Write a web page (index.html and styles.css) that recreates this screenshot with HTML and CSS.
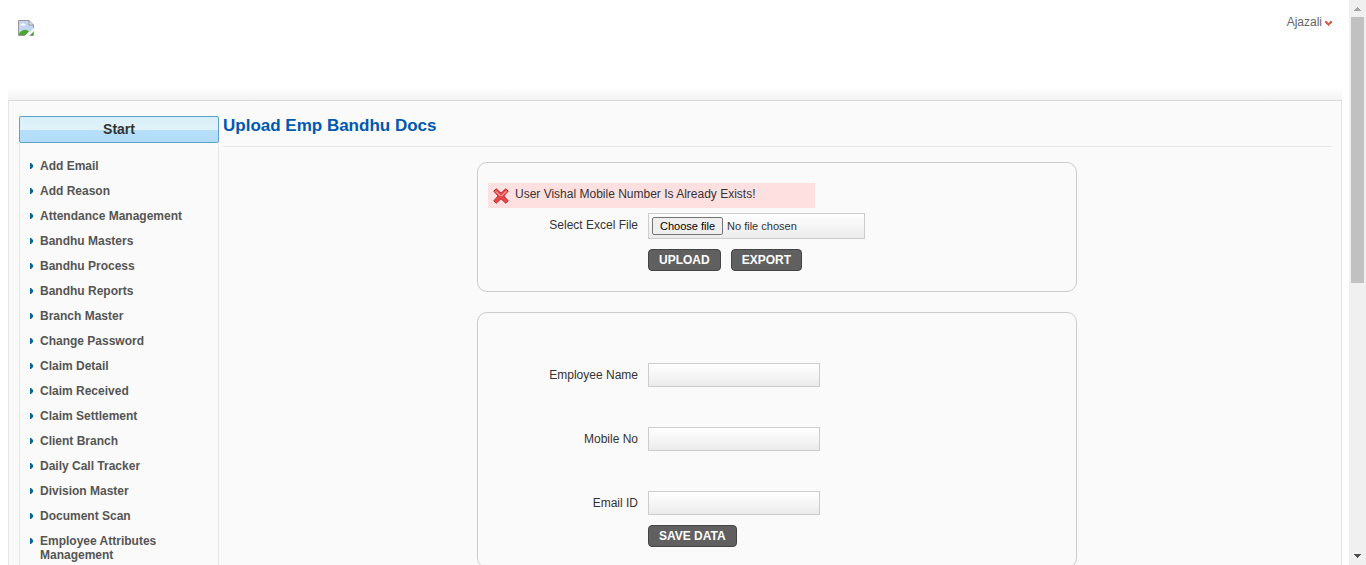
FILE: index.html
```html
<!DOCTYPE html>
<html lang="en">
<head>
<meta charset="utf-8">
<title>Upload Emp Bandhu Docs</title>
<link rel="stylesheet" href="styles.css">
</head>
<body>
<div class="page">
  <header class="header">
    <a class="logo" href="#" aria-label="Home">
      <svg width="16" height="16" viewBox="0 0 16 16">
        <path d="M1 1h10l4 4v10H1z" fill="#c3d5f5"/>
        <path d="M2.500 5.500a1 1 0 0 1 1-1.300 1.600 1.600 0 0 1 3 0 1 1 0 0 1 1 1.300z" fill="#fff"/>
        <path d="M1 15v-1.500C3 11 5 9.800 7 9.800S10 10.500 11 11.500L7.500 15z" fill="#47a82c"/>
        <path d="M12 15l3-3v3z" fill="#47a82c"/>
        <path d="M11 1l4 4h-4z" fill="#f2f2f2"/>
        <path d="M.500 15.500V.500H11L15.500 5v10.500zM11 .500V5h4.500" fill="none" stroke="#979797"/>
        <path d="M6.500 16l5-4.500h1.500L16 7.500V11l-5 5z" fill="#fff"/>
      </svg>
    </a>
    <button class="user" type="button">Ajazali
      <svg width="7" height="5" viewBox="0 0 7 5" shape-rendering="crispEdges"><path d="M0 0h2v1h1v1h1V1h1V0h2v2H6v1H5v1H4v1H3V4H2V3H1V2H0z" fill="#d9604f"/></svg>
    </button>
  </header>
  <div class="body">
    <nav class="sidebar">
      <h2 class="start">Start</h2>
      <ul class="menu">
        <li><a href="#">Add Email</a></li>
        <li><a href="#">Add Reason</a></li>
        <li><a href="#">Attendance Management</a></li>
        <li><a href="#">Bandhu Masters</a></li>
        <li><a href="#">Bandhu Process</a></li>
        <li><a href="#">Bandhu Reports</a></li>
        <li><a href="#">Branch Master</a></li>
        <li><a href="#">Change Password</a></li>
        <li><a href="#">Claim Detail</a></li>
        <li><a href="#">Claim Received</a></li>
        <li><a href="#">Claim Settlement</a></li>
        <li><a href="#">Client Branch</a></li>
        <li><a href="#">Daily Call Tracker</a></li>
        <li><a href="#">Division Master</a></li>
        <li><a href="#">Document Scan</a></li>
        <li><a href="#">Employee Attributes Management</a></li>
      </ul>
    </nav>
    <main class="content">
      <h1 class="title">Upload Emp Bandhu Docs</h1>
      <form class="card">
        <p class="alert" role="alert">
          <svg width="16" height="16" viewBox="0 0 16 16"><path d="M3.200.800L8 5.200 12.800.800 15.200 3.200 10.800 8l4.400 4.800-2.400 2.400L8 10.800l-4.800 4.400L.800 12.800 5.200 8 .800 3.200z" fill="#e84a4a" stroke="#b8202a" stroke-width="1" stroke-linejoin="round"/><path d="M2.500 3.200L7 7.500h2l4.500-4.300" fill="none" stroke="#f59a96" stroke-width="1.200"/></svg>
          <span>User Vishal Mobile Number Is Already Exists!</span>
        </p>
        <div class="row">
          <label class="label" for="file">Select Excel File</label>
          <div class="file">
            <span class="choose" aria-hidden="true">Choose file</span>
            <span aria-hidden="true">No file chosen</span>
            <input class="picker" id="file" type="file">
          </div>
        </div>
        <div class="actions">
          <button class="button" type="button">UPLOAD</button>
          <button class="button" type="button">EXPORT</button>
        </div>
      </form>
      <form class="card person">
        <div class="row"><label class="label" for="name">Employee Name</label><input class="text" id="name" type="text"></div>
        <div class="row"><label class="label" for="mobile">Mobile No</label><input class="text" id="mobile" type="text"></div>
        <div class="row"><label class="label" for="email">Email ID</label><input class="text" id="email" type="text"></div>
        <div class="actions"><button class="button" type="button">SAVE DATA</button></div>
      </form>
    </main>
  </div>
</div>
<div class="scrollbar" aria-hidden="true">
  <svg width="17" height="17" viewBox="0 0 17 17" shape-rendering="crispEdges"><path d="M8 7h1v1h1v1h1v1h1v1H5v-1h1V9h1V8h1z" fill="#a3a3a3"/></svg>
  <div class="track"><div class="thumb"></div></div>
  <svg width="17" height="17" viewBox="0 0 17 17" shape-rendering="crispEdges"><path d="M5 6h7v1h-1v1h-1v1H9v1H8V9H7V8H6V7H5z" fill="#505050"/></svg>
</div>
</body>
</html>
```
FILE: styles.css
```css
* { box-sizing: border-box; }
body {
  margin: 0;
  height: 100vh;
  display: flex;
  overflow: hidden;
  background: #fff;
  color: #333;
  font: 12px/14px "Liberation Sans", Arial, sans-serif;
}
.page { flex: 1; padding: 0 7px 0 8px; overflow: hidden; }
.header {
  display: flex;
  justify-content: space-between;
  align-items: flex-start;
  height: 101px;
  padding: 15px 10px 0;
  border-bottom: 1px solid #d9d9d9;
  background: linear-gradient(#fff, #f3f3f3) bottom / 100% 13px no-repeat;
}
.logo { padding-top: 5px; }
.logo svg { display: block; }
.user {
  display: flex;
  align-items: center;
  gap: 3px;
  padding: 0;
  border: 0;
  background: none;
  color: #666;
  font: inherit;
}
.user svg { margin-top: 2px; }
.body {
  display: flex;
  gap: 4px;
  padding: 15px 10px 0;
  border: 1px solid #e6e6e6;
  border-width: 0 1px;
  background: #fafafa;
}
.sidebar { flex: 0 0 200px; }
.start {
  margin: 0;
  height: 27px;
  border: 1px solid #5ca3cb;
  border-radius: 2px;
  background: linear-gradient(#d9eff8, #e0f3f9 13px, #b6e0f9 13px, #b2dcf7);
  font-size: 14px;
  line-height: 25px;
  text-align: center;
}
.menu {
  display: flex;
  flex-direction: column;
  gap: 11px;
  margin: 0;
  padding: 16px 9px 20px;
  border: 1px solid #e6e6e6;
  border-width: 0 1px;
  list-style: none;
  font-weight: bold;
}
.menu a {
  display: flex;
  gap: 7px;
  width: 158px;
  color: #555;
  text-decoration: none;
}
.menu a::before {
  content: "";
  flex: none;
  width: 3px;
  height: 6px;
  margin: 4px 0 0 1px;
  background: #006699;
  clip-path: polygon(0 0, 34% 0, 100% 34%, 100% 66%, 34% 100%, 0 100%);
}
.content { flex: 1; min-width: 0; }
.title {
  margin: 0 0 15px;
  padding-bottom: 11px;
  border-bottom: 1px solid #e6e6e6;
  color: #0058b0;
  font-size: 17px;
  line-height: 19px;
}
.card {
  max-width: 600px;
  margin: 0 auto 20px;
  padding: 20px 10px;
  border: 1px solid #ccc;
  border-radius: 10px;
}
.person { padding-top: 50px; }
.alert {
  display: flex;
  gap: 6px;
  width: 327px;
  margin: 0 0 5px;
  padding: 4px 5px;
  background: #ffe0e1;
}
.alert svg { margin-top: 1px; }
.row {
  display: grid;
  grid-template-columns: 150px 1fr;
  gap: 10px;
  margin-bottom: 10px;
}
.person .row + .row { margin-top: 40px; }
.person .row:not(:nth-last-child(2)) { margin-bottom: 0; }
.label { padding-top: 5px; text-align: right; }
.file, .text {
  border: 1px solid #ccc;
  background: linear-gradient(#fff, #ebebeb);
}
.text { width: 172px; height: 24px; padding: 3px; font: inherit; }
.file {
  position: relative;
  display: flex;
  align-items: center;
  gap: 4px;
  width: 217px;
  height: 26px;
  padding: 3px;
  font-size: 11px;
}
.choose {
  padding: 1px 7px;
  border: 1px solid #767676;
  border-radius: 2px;
  background: #efefef;
  color: #000;
}
.picker {
  position: absolute;
  inset: 0;
  width: 100%;
  opacity: 0;
}
.actions { display: flex; gap: 10px; margin-left: 160px; }
.button {
  height: 22px;
  padding: 0 10px;
  border: 1px solid #444;
  border-radius: 4px;
  background: #606060;
  color: #fff;
  font: bold 12px/14px "Liberation Sans", Arial, sans-serif;
}
.scrollbar {
  flex: 0 0 17px;
  display: flex;
  flex-direction: column;
  background: #f0f0f0;
}
.track { flex: 1; padding: 0 2px; }
.thumb { height: 50%; background: #c1c1c1; }
```
